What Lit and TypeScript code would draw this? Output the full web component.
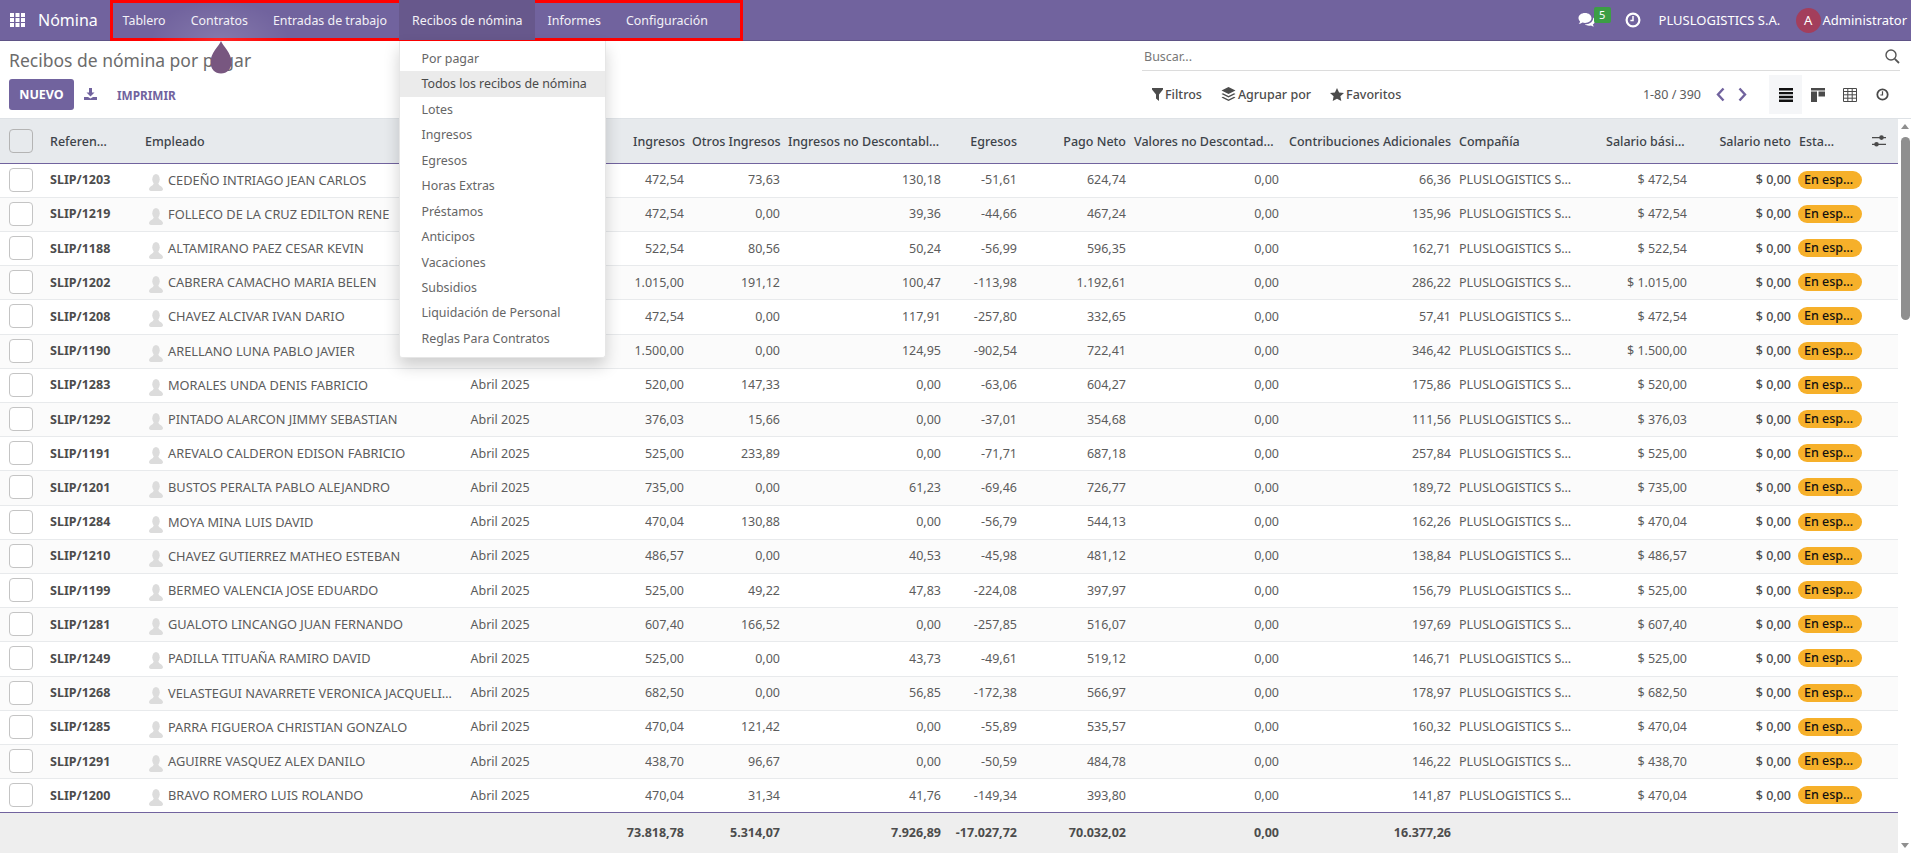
import { LitElement, html, css, svg } from "lit";
import { customElement } from "lit/decorators.js";

const NAV = ["Tablero", "Contratos", "Entradas de trabajo", "Recibos de nómina", "Informes", "Configuración"];
const MENU = ["Por pagar", "Todos los recibos de nómina", "Lotes", "Ingresos", "Egresos", "Horas Extras", "Préstamos", "Anticipos", "Vacaciones", "Subsidios", "Liquidación de Personal", "Reglas Para Contratos"];

// column edges taken from the reference
const COLS = [46, 95, 325.5, 162.5, 59, 96, 161, 76, 109, 153, 172, 147, 89, 104, 71, 32];
const HEAD: [string, string][] = [
  ["", ""], ["Referen…", "l"], ["Empleado", "l"], ["", "l"], ["Ingresos", "r"], ["Otros Ingresos", "r"],
  ["Ingresos no Descontabl…", "l"], ["Egresos", "r"], ["Pago Neto", "r"], ["Valores no Descontad…", "l"],
  ["Contribuciones Adicionales", "r"], ["Compañía", "l"], ["Salario bási…", "l"], ["Salario neto", "r"], ["Esta…", "l"],
];
// the open menu hides the period column of the first rows
const HIDDEN_PERIOD_ROWS = 6;

const ROWS: string[][] = [
  ["1203", "CEDEÑO INTRIAGO JEAN CARLOS", "472,54", "73,63", "130,18", "-51,61", "624,74", "66,36"],
  ["1219", "FOLLECO DE LA CRUZ EDILTON RENE", "472,54", "0,00", "39,36", "-44,66", "467,24", "135,96"],
  ["1188", "ALTAMIRANO PAEZ CESAR KEVIN", "522,54", "80,56", "50,24", "-56,99", "596,35", "162,71"],
  ["1202", "CABRERA CAMACHO MARIA BELEN", "1.015,00", "191,12", "100,47", "-113,98", "1.192,61", "286,22"],
  ["1208", "CHAVEZ ALCIVAR IVAN DARIO", "472,54", "0,00", "117,91", "-257,80", "332,65", "57,41"],
  ["1190", "ARELLANO LUNA PABLO JAVIER", "1.500,00", "0,00", "124,95", "-902,54", "722,41", "346,42"],
  ["1283", "MORALES UNDA DENIS FABRICIO", "520,00", "147,33", "0,00", "-63,06", "604,27", "175,86"],
  ["1292", "PINTADO ALARCON JIMMY SEBASTIAN", "376,03", "15,66", "0,00", "-37,01", "354,68", "111,56"],
  ["1191", "AREVALO CALDERON EDISON FABRICIO", "525,00", "233,89", "0,00", "-71,71", "687,18", "257,84"],
  ["1201", "BUSTOS PERALTA PABLO ALEJANDRO", "735,00", "0,00", "61,23", "-69,46", "726,77", "189,72"],
  ["1284", "MOYA MINA LUIS DAVID", "470,04", "130,88", "0,00", "-56,79", "544,13", "162,26"],
  ["1210", "CHAVEZ GUTIERREZ MATHEO ESTEBAN", "486,57", "0,00", "40,53", "-45,98", "481,12", "138,84"],
  ["1199", "BERMEO VALENCIA JOSE EDUARDO", "525,00", "49,22", "47,83", "-224,08", "397,97", "156,79"],
  ["1281", "GUALOTO LINCANGO JUAN FERNANDO", "607,40", "166,52", "0,00", "-257,85", "516,07", "197,69"],
  ["1249", "PADILLA TITUAÑA RAMIRO DAVID", "525,00", "0,00", "43,73", "-49,61", "519,12", "146,71"],
  ["1268", "VELASTEGUI NAVARRETE VERONICA JACQUELI…", "682,50", "0,00", "56,85", "-172,38", "566,97", "178,97"],
  ["1285", "PARRA FIGUEROA CHRISTIAN GONZALO", "470,04", "121,42", "0,00", "-55,89", "535,57", "160,32"],
  ["1291", "AGUIRRE VASQUEZ ALEX DANILO", "438,70", "96,67", "0,00", "-50,59", "484,78", "146,22"],
  ["1200", "BRAVO ROMERO LUIS ROLANDO", "470,04", "31,34", "41,76", "-149,34", "393,80", "141,87"],
];
const TOTALS = ["73.818,78", "5.314,07", "7.926,89", "-17.027,72", "70.032,02", "0,00", "16.377,26"];

const icon = (w: number, h: number, vb: string, body: unknown, cls = "") =>
  html`<svg class=${cls} width=${w} height=${h} viewBox=${vb} fill="currentColor">${body}</svg>`;

const clock = (size: number) => icon(size, size, "0 0 16 16", svg`
  <circle cx="8" cy="8" r="6.4" fill="none" stroke="currentColor" stroke-width="2.2"/>
  <path d="M8 4v4.6H5.4" fill="none" stroke="currentColor" stroke-width="1.5"/>`);

@customElement("app-root")
export class AppRoot extends LitElement {
  static styles = css`
    :host {
      display: block;
      position: relative;
      height: 854px;
      overflow: hidden;
      background: #fff;
      font-family: "Noto Sans", sans-serif;
      font-size: 12.5px;
      color: #5c5c5c;
    }
    .navbar {
      display: flex;
      align-items: stretch;
      height: 40px;
      background: #71639e;
      border-bottom: 1px solid #5f5386;
      color: #fff;
    }
    .apps { display: flex; align-items: center; padding-left: 10px; width: 28px; }
    .brand { display: flex; align-items: center; width: 72px; font-size: 16px; }
    .sections {
      position: relative;
      display: flex;
      height: 41px;
      width: 633px;
      box-sizing: border-box;
      outline: 3px solid #f00;
      outline-offset: -3px;
      z-index: 3;
    }
    .sections::before {
      content: "";
      position: absolute;
      left: 40px;
      top: 0;
      width: 140px;
      height: 41px;
      background: radial-gradient(ellipse at 50% 100%, rgba(255, 255, 255, 0.14), transparent 70%);
      pointer-events: none;
    }
    .section {
      position: relative;
      display: flex;
      align-items: center;
      padding: 0 12.55px;
      height: 40px;
      white-space: nowrap;
      font-size: 12.4px;
      color: #f3f1f7;
    }
    .section.open { background: #67588c; }
    .menu {
      position: absolute;
      left: 0;
      top: 41px;
      width: 207px;
      padding: 5px 0 6px;
      background: #fff;
      border-radius: 0 0 3px 3px;
      box-shadow: 0 8px 16px rgba(0, 0, 0, 0.18);
      border: 1px solid #e6e6e6;
      border-top: 0;
      box-sizing: border-box;
    }
    .menu div {
      height: 25.45px;
      line-height: 25.45px;
      padding-left: 21px;
      color: #666;
      font-size: 12.4px;
    }
    .menu .hover { background: #ebebeb; color: #4a4a4a; }
    .systray { margin-left: auto; display: flex; align-items: center; padding-right: 4px; font-size: 13px; }
    .chat { position: relative; display: flex; width: 47px; }
    .badge {
      position: absolute;
      left: 16px;
      top: -5px;
      width: 17px;
      height: 16px;
      background: #3c9e45;
      border-radius: 2px;
      font-size: 11px;
      line-height: 16px;
      text-align: center;
    }
    .company { margin-left: 18px; width: 137px; white-space: nowrap; }
    .avatar {
      width: 25px;
      height: 25px;
      border-radius: 50%;
      background: #a33e5c;
      margin-right: 2px;
      text-align: center;
      line-height: 25px;
    }

    .panel {
      display: grid;
      grid-template-columns: 1142px 1fr;
      height: 77px;
    }
    .title { margin: 6px 0 0 9px; height: 26px; font-size: 17.5px; line-height: 26px; color: #6c6c6c; }
    .actions { display: flex; align-items: center; margin: 6px 0 0 9px; }
    .primary {
      width: 65px;
      height: 31px;
      line-height: 31px;
      text-align: center;
      background: #71639e;
      border-radius: 3px;
      color: #fff;
      font-weight: 700;
      font-size: 12.5px;
    }
    .dl { margin: -2px 0 0 10px; color: #71639e; display: flex; }
    .print { margin-left: 20px; color: #71639e; font-weight: 700; font-size: 11.8px; }
    .search {
      display: flex;
      align-items: center;
      justify-content: space-between;
      width: 758px;
      height: 30px;
      box-sizing: border-box;
      border-bottom: 1px solid #dcdcdc;
      padding: 2px 0 0 2px;
      color: #777;
    }
    .search svg { color: #555; }
    .tools { display: flex; align-items: center; height: 47px; margin-left: 10px; }
    .tool { display: flex; align-items: center; gap: 2px; color: #4c4c4c; margin-right: 19px; font-weight: 500; }
    .tool svg { flex: none; }
    .pager { margin-left: auto; display: flex; align-items: center; color: #5c5c5c; }
    .pager svg { color: #71639e; }
    .pager .prev { margin-left: 15px; }
    .pager .next { margin-left: 13px; }
    .views { display: flex; margin-left: 22px; margin-right: 13px; height: 39px; }
    .views span { display: flex; width: 32px; align-items: center; justify-content: center; color: #4a4a4a; }
    .views .on { background: #f5f6f8; width: 33px; color: #111; }

    .body { display: flex; border-top: 1px solid #dee2e6; }
    table {
      width: 1898px;
      flex: none;
      table-layout: fixed;
      border-collapse: collapse;
    }
    thead tr { height: 44px; background: #e7eaed; }
    th {
      padding: 1px 4px 0;
      font-weight: 500;
      font-size: 12.5px;
      color: #3d4349;
      white-space: nowrap;
      overflow: hidden;
      border-bottom: 1px solid #71639e;
    }
    td { padding: 0 4px 1px; white-space: nowrap; overflow: hidden; }
    tbody tr { height: 34.21px; border-bottom: 1px solid #e8eaec; }
    tbody tr:nth-child(even) { background: #fbfbfb; }
    tbody tr:last-child { border-bottom: 1px solid #71639e; }
    .l { text-align: left; }
    .r { text-align: right; }
    .check {
      display: block;
      width: 24px;
      height: 24px;
      margin-left: 5px;
      box-sizing: border-box;
      border: 1px solid #c4c4c4;
      border-radius: 4px;
      background: #fff;
    }
    th .check { background: transparent; border-color: #b4b4b4; }
    .ref { font-weight: 700; color: #4c4c4c; }
    .emp { display: flex; align-items: center; font-size: 12.8px; }
    .emp svg { flex: none; margin: 5px 4px 0 3px; }
    .net { font-weight: 500; color: #4c4c4c; }
    .status {
      display: block;
      width: 64px;
      height: 18px;
      box-sizing: border-box;
      padding-left: 6px;
      margin-left: -1px;
      line-height: 17px;
      border-radius: 9px;
      background: #f6b02a;
      color: #111;
      font-weight: 500;
    }
    .gear { color: #4a4a4a; display: block; margin-left: 2px; }
    tfoot tr { height: 40px; background: #eee; }
    tfoot td { font-weight: 700; color: #4c4c4c; }

    .scroll {
      position: relative;
      flex: 1;
      background: #fff;
    }
    .scroll .up, .scroll .down {
      position: absolute;
      left: 3px;
      width: 0;
      height: 0;
      border-left: 4px solid transparent;
      border-right: 4px solid transparent;
    }
    .scroll .up { top: 5px; border-bottom: 5px solid #8f8f8f; }
    .scroll .down { bottom: 5px; border-top: 5px solid #8f8f8f; }
    .thumb {
      position: absolute;
      left: 3px;
      right: 1px;
      top: 18px;
      height: 183px;
      border-radius: 5px;
      background: #8f8f8f;
    }
    .drop { position: absolute; left: 210px; top: 41px; z-index: 2; }
  `;

  private avatar() {
    return icon(16, 17, "0 0 16 17", svg`
      <ellipse cx="8" cy="5.2" rx="3.7" ry="5.2" fill="#dcdcdc"/>
      <path d="M5.5 9.5 C5.500 12 1.500 12 1 15 Q1 17 4 17 H12 Q15 17 15 15 C14.500 12 10.500 12 10.500 9.5Z" fill="#dcdcdc"/>`);
  }

  private renderNavbar() {
    return html`
      <nav class="navbar">
        <div class="apps">${icon(15, 14, "0 0 15 14", svg`
          <path d="M0 0h4v4H0zM5.500 0h4v4h-4zM11 0h4v4h-4zM0 5h4v4H0zM5.500 5h4v4h-4zM11 5h4v4h-4zM0 10h4v4H0zM5.500 10h4v4h-4zM11 10h4v4h-4z"/>`)}</div>
        <div class="brand">Nómina</div>
        <div class="sections">
          ${NAV.map((name) => name === "Recibos de nómina"
            ? html`<div class="section open">${name}
                <div class="menu">
                  ${MENU.map((m) => html`<div class=${m.startsWith("Todos") ? "hover" : ""}>${m}</div>`)}
                </div>
              </div>`
            : html`<div class="section">${name}</div>`)}
        </div>
        <div class="systray">
          <div class="chat">
            ${icon(18, 16, "0 0 18 16", svg`
              <path d="M7 1C3.200 1 .5 3.200.5 6c0 1.300.6 2.500 1.600 3.400-.2 1-.8 1.900-1.500 2.600 1.500-.1 2.800-.7 3.800-1.500.8.300 1.700.4 2.600.4 3.800 0 6.500-2.200 6.500-4.900S10.800 1 7 1z"/>
              <path d="M15 5.500c.1.300.1.500.1.800 0 3.300-3.100 5.800-7 5.900-.5 0-.9 0-1.300-.1 1 1 2.500 1.600 4.200 1.600.7 0 1.400-.1 2-.3.8.6 1.800 1 3 1.100-.6-.6-1-1.300-1.200-2 1.300-.8 2.200-2 2.200-3.400 0-1.500-.8-2.800-2-3.600z"/>`)}
            <span class="badge">5</span>
          </div>
          ${clock(16)}
          <span class="company">PLUSLOGISTICS S.A.</span>
          <span class="avatar">A</span>
          <span>Administrator</span>
        </div>
      </nav>`;
  }

  private renderPanel() {
    return html`
      <section class="panel">
        <div>
          <div class="title">Recibos de nómina por pagar</div>
          <div class="actions">
            <span class="primary">NUEVO</span>
            <span class="dl">${icon(13, 12, "0 0 13 12", svg`
              <path d="M5 0h3v4.500h2.500L6.500 8.500 2.500 4.500H5z"/><path d="M0 9h4l2.500 1.500L9 9h4v3H0z"/>`)}</span>
            <span class="print">IMPRIMIR</span>
          </div>
        </div>
        <div>
          <div class="search">
            <span>Buscar...</span>
            ${icon(15, 15, "0 0 15 15", svg`
              <circle cx="6" cy="6" r="5" fill="none" stroke="currentColor" stroke-width="1.4"/>
              <path d="M9.800 9.800 14 14" stroke="currentColor" stroke-width="1.800" fill="none"/>`)}
          </div>
          <div class="tools">
            <span class="tool">${icon(11, 13, "0 0 11 13", svg`<path d="M0 0h11v1.500L7 6.500V13L4 10.500v-4L0 1.500z"/>`)}Filtros</span>
            <span class="tool">${icon(15, 16, "0 0 15 16", svg`
              <path d="M7.500 0 14.500 3.500 7.500 7 .5 3.500z"/>
              <path d="M2 6.300 7.500 9 13 6.300l1.500.8-7 3.500-7-3.500z"/>
              <path d="M2 9.800 7.500 12.500 13 9.800l1.500.8-7 3.500-7-3.500z"/>`)}Agrupar por</span>
            <span class="tool">${icon(14, 13, "0 0 14 13", svg`
              <path d="M7 0l2.100 4.400 4.900.6-3.600 3.300.9 4.700L7 10.700 2.700 13l.9-4.700L0 5l4.900-.6z"/>`)}Favoritos</span>
            <div class="pager">
              <span>1-80 / 390</span>
              ${icon(9, 15, "0 0 9 15", svg`<path d="M7.500 1.500 2 7.500l5.500 6" fill="none" stroke="currentColor" stroke-width="2.400"/>`, "prev")}
              ${icon(9, 15, "0 0 9 15", svg`<path d="M1.500 1.500 7 7.500l-5.500 6" fill="none" stroke="currentColor" stroke-width="2.400"/>`, "next")}
            </div>
            <div class="views">
              <span class="on">${icon(14, 14, "0 0 14 14", svg`<path d="M0 0h14v2.400H0zM0 3.900h14v2.400H0zM0 7.800h14v2.400H0zM0 11.600h14V14H0z"/>`)}</span>
              <span>${icon(14, 14, "0 0 14 14", svg`<path d="M0 0h14v2.500H0zM0 3.500h6V14H0zM7.500 3.500H14v5H7.500z"/>`)}</span>
              <span>${icon(14, 14, "0 0 14 14", svg`<path d="M.5.500h13v13H.5zM.5 3.500h13M.5 6.800h13M.5 10.200h13M4.800.5v13M9.200.5v13" fill="none" stroke="currentColor" stroke-width="1"/>`)}</span>
              <span>${clock(13)}</span>
            </div>
          </div>
        </div>
      </section>`;
  }

  private renderRow(r: string[], i: number) {
    return html`<tr>
      <td><span class="check"></span></td>
      <td class="ref">SLIP/${r[0]}</td>
      <td><div class="emp">${this.avatar()}${r[1]}</div></td>
      <td>${i < HIDDEN_PERIOD_ROWS ? "" : "Abril 2025"}</td>
      <td class="r">${r[2]}</td>
      <td class="r">${r[3]}</td>
      <td class="r">${r[4]}</td>
      <td class="r">${r[5]}</td>
      <td class="r">${r[6]}</td>
      <td class="r">0,00</td>
      <td class="r">${r[7]}</td>
      <td>PLUSLOGISTICS S…</td>
      <td class="r">$ ${r[2]}</td>
      <td class="r net">$ 0,00</td>
      <td><span class="status">En esp…</span></td>
      <td></td>
    </tr>`;
  }

  private renderTable() {
    return html`
      <table>
        <colgroup>${COLS.map((w) => html`<col style="width:${w}px" />`)}</colgroup>
        <thead>
          <tr>
            <th><span class="check"></span></th>
            ${HEAD.slice(1).map(([t, a]) => html`<th class=${a}>${t}</th>`)}
            <th>${icon(14, 14, "0 0 14 14", svg`
              <path d="M0 3h14v1.300H0zM0 9.700h14V11H0z"/>
              <circle cx="9.500" cy="3.600" r="2.300"/><circle cx="4.500" cy="10.300" r="2.300"/>`, "gear")}</th>
          </tr>
        </thead>
        <tbody>${ROWS.map((r, i) => this.renderRow(r, i))}</tbody>
        <tfoot>
          <tr>
            <td colspan="5" class="r">${TOTALS[0]}</td>
            ${TOTALS.slice(1).map((t) => html`<td class="r">${t}</td>`)}
            <td colspan="5"></td>
          </tr>
        </tfoot>
      </table>`;
  }

  render() {
    return html`
      ${this.renderNavbar()}
      ${this.renderPanel()}
      <div class="body">
        ${this.renderTable()}
        <div class="scroll"><i class="up"></i><div class="thumb"></div><i class="down"></i></div>
      </div>
      <svg class="drop" width="22" height="33" viewBox="0 0 22 33"><path d="M11 0C13 5 21.500 12 21.500 21 21.500 28 17 32.500 11 32.500S.5 28 .5 21C.5 12 9 5 11 0z" fill="#785780"/></svg>
    `;
  }
}
